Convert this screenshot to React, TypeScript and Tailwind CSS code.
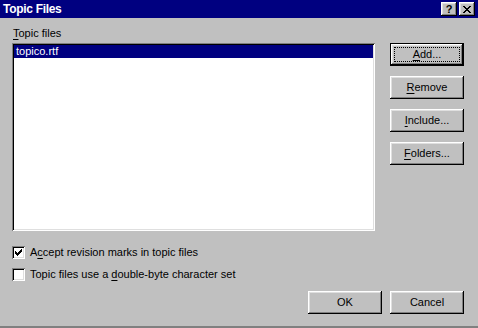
import React from 'react';

const raised =
  'shadow-[inset_-1px_-1px_#000,inset_1px_1px_#fff,inset_-2px_-2px_#808080,inset_2px_2px_#dfdfdf]';
const sunken =
  'shadow-[inset_1px_1px_#808080,inset_-1px_-1px_#fff,inset_2px_2px_#000,inset_-2px_-2px_#dfdfdf]';

const U: React.FC<{ children: React.ReactNode }> = ({ children }) => (
  <span className="underline underline-offset-[2px] decoration-1">{children}</span>
);

const Btn: React.FC<{ children: React.ReactNode; primary?: boolean }> = ({ children, primary }) => {
  if (primary) {
    return (
      <div className="w-[74px] h-[23px] border border-black bg-[#c0c0c0]">
        <div className={`w-full h-full flex p-[3px] ${raised}`}>
          <div className="flex-1 flex items-center justify-center border border-dotted border-black">
            {children}
          </div>
        </div>
      </div>
    );
  }
  return (
    <div className={`w-[74px] h-[23px] flex items-center justify-center bg-[#c0c0c0] ${raised}`}>
      {children}
    </div>
  );
};

const Check: React.FC<{ checked?: boolean; children: React.ReactNode }> = ({ checked, children }) => (
  <div className="flex items-center h-[13px] gap-[5px]">
    <div className={`w-[13px] h-[13px] bg-white flex items-center justify-center ${sunken}`}>
      {checked && (
        <svg width="7" height="7" viewBox="0 0 7 7" shapeRendering="crispEdges">
          <path d="M0 2h1v3h-1zM1 3h1v3h-1zM2 4h1v3h-1zM3 3h1v3h-1zM4 2h1v3h-1zM5 1h1v3h-1zM6 0h1v3h-1z" fill="#000" />
        </svg>
      )}
    </div>
    <span>{children}</span>
  </div>
);

export default function App() {
  return (
    <div
      className="w-[478px] h-[328px] bg-[#c0c0c0] flex flex-col text-[11px] leading-[13px] text-black border-b-2 border-[#808080]"
      style={{ fontFamily: '"Liberation Sans", Arial, sans-serif' }}
    >
      {/* Title bar */}
      <div className="h-[18px] bg-[#000080] flex items-center pl-[3px] pr-[3px]">
        <span className="text-white font-bold text-[12px] tracking-[-0.3px] flex-1">Topic Files</span>
        <div className="flex gap-[2px]">
          <div className={`w-[16px] h-[14px] bg-[#c0c0c0] flex items-center justify-center font-bold text-[11px] ${raised}`}>
            ?
          </div>
          <div className={`w-[16px] h-[14px] bg-[#c0c0c0] flex items-center justify-center ${raised}`}>
            <svg width="8" height="7" viewBox="0 0 8 7" shapeRendering="crispEdges">
              <path d="M0 0h2v1h-2zM6 0h2v1h-2zM1 1h2v1h-2zM5 1h2v1h-2zM2 2h4v1h-4zM3 3h2v1h-2zM2 4h4v1h-4zM1 5h2v1h-2zM5 5h2v1h-2zM0 6h2v1h-2zM6 6h2v1h-2z" fill="#000" />
            </svg>
          </div>
        </div>
      </div>

      {/* Body */}
      <div className="flex pl-[12px]">
        <div className="flex flex-col">
          <div className="mt-[9px] h-[13px] pl-[1px]">
            <U>T</U>opic files
          </div>
          <div className={`mt-[3px] w-[363px] h-[188px] bg-white p-[2px] ${sunken}`}>
            <div className="h-[13px] bg-[#000080] text-white pl-[2px] flex items-center">topico.rtf</div>
          </div>
        </div>
        <div className="ml-[15px] pt-[25px] flex flex-col gap-[10px]">
          <Btn primary>
            <U>A</U>dd...
          </Btn>
          <Btn>
            <U>R</U>emove
          </Btn>
          <Btn>
            <U>I</U>nclude...
          </Btn>
          <Btn>
            <U>F</U>olders...
          </Btn>
        </div>
      </div>

      <div className="pl-[12px] mt-[15px] flex flex-col gap-[9px]">
        <Check checked>
          A<U>c</U>cept revision marks in topic files
        </Check>
        <Check>
          Topic files use a <U>d</U>ouble-byte character set
        </Check>
      </div>

      <div className="mt-[10px] flex justify-end gap-[8px] pr-[14px]">
        <Btn>OK</Btn>
        <Btn>Cancel</Btn>
      </div>
    </div>
  );
}
